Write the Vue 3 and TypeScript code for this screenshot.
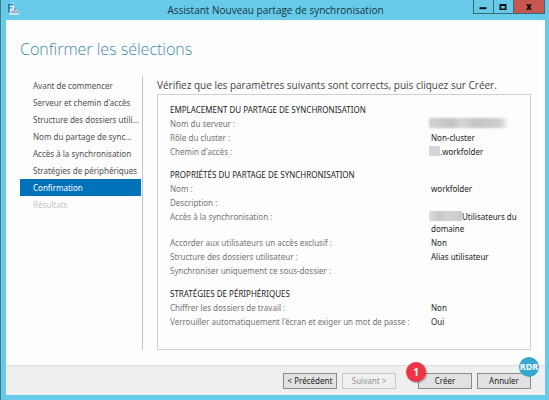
<script setup lang="ts">
interface Row {
  label: string
  value: string
  mask?: 'line' | 'short' | 'medium'
}

interface Section {
  title: string
  rows: Row[]
}

const steps: string[] = [
  'Avant de commencer',
  "Serveur et chemin d'accès",
  'Structure des dossiers utili...',
  'Nom du partage de sync...',
  'Accès à la synchronisation',
  'Stratégies de périphériques',
  'Confirmation',
  'Résultats',
]
const current = 6

const sections: Section[] = [
  {
    title: 'EMPLACEMENT DU PARTAGE DE SYNCHRONISATION',
    rows: [
      { label: 'Nom du serveur :', value: '', mask: 'line' },
      { label: 'Rôle du cluster :', value: 'Non-cluster' },
      { label: "Chemin d'accès :", value: '.workfolder', mask: 'short' },
    ],
  },
  {
    title: 'PROPRIÉTÉS DU PARTAGE DE SYNCHRONISATION',
    rows: [
      { label: 'Nom :', value: 'workfolder' },
      { label: 'Description :', value: '' },
      { label: 'Accès à la synchronisation :', value: 'Utilisateurs du domaine', mask: 'medium' },
      { label: 'Accorder aux utilisateurs un accès exclusif :', value: 'Non' },
      { label: 'Structure des dossiers utilisateur :', value: 'Alias utilisateur' },
      { label: 'Synchroniser uniquement ce sous-dossier :', value: '' },
    ],
  },
  {
    title: 'STRATÉGIES DE PÉRIPHÉRIQUES',
    rows: [
      { label: 'Chiffrer les dossiers de travail :', value: 'Non' },
      { label: "Verrouiller automatiquement l'écran et exiger un mot de passe :", value: 'Oui' },
    ],
  },
]
</script>

<template>
  <div class="window">
    <header class="titlebar">
      <svg class="app-icon" viewBox="0 0 12 12" aria-hidden="true">
        <path d="M1 0.5h6v9H1z" fill="#f4f8fc" />
        <path d="M1 0.5h1.8v9H1zM2.5 1h4v1.6h-4zM2.5 4.2h2.8v1.2H2.5z" fill="#2878bd" />
        <path d="M3 8.5 7.5 5l4.2 3.5v2.8H3z" fill="#c7d3df" />
        <path d="M4 8.6h7v1H4z" fill="#7190ad" />
        <path d="M2 10.5h10v1H2z" fill="#eef2f7" />
        <circle cx="8" cy="6.3" r="1.2" fill="#8799ad" />
      </svg>
      <span class="title">Assistant Nouveau partage de synchronisation</span>
      <div class="controls">
        <button type="button" class="ctl" aria-label="Réduire">
          <svg viewBox="0 0 8 8"><path d="M0.5 4.2h7v2h-7z" /></svg>
        </button>
        <button type="button" class="ctl" aria-label="Agrandir">
          <svg viewBox="0 0 8 8"><path fill-rule="evenodd" d="M0.5 1h7v6h-7zM2.2 3v2.6h3.6V3z" /></svg>
        </button>
        <button type="button" class="ctl close" aria-label="Fermer">
          <svg viewBox="0 0 8 8"><path d="M1.2 1h2L4 2.5 4.8 1h2L5.2 4l1.6 3h-2L4 5.5 3.2 7h-2l1.6-3z" /></svg>
        </button>
      </div>
    </header>

    <div class="client">
      <h1>Confirmer les sélections</h1>
      <div class="body">
        <nav class="steps">
          <a
            v-for="(step, i) in steps"
            :key="step"
            href="#"
            class="step"
            :class="{ active: i === current, pending: i > current }"
            >{{ step }}</a
          >
        </nav>
        <main class="main">
          <p class="intro">Vérifiez que les paramètres suivants sont corrects, puis cliquez sur Créer.</p>
          <div class="summary">
            <section v-for="s in sections" :key="s.title">
              <h2>{{ s.title }}</h2>
              <dl>
                <div v-for="r in s.rows" :key="r.label" class="row">
                  <dt>{{ r.label }}</dt>
                  <dd><span v-if="r.mask" class="mask" :class="r.mask"></span>{{ r.value }}</dd>
                </div>
              </dl>
            </section>
          </div>
        </main>
      </div>

      <footer class="footer">
        <button type="button" class="btn">&lt; Précédent</button>
        <button type="button" class="btn" disabled>Suivant &gt;</button>
        <button type="button" class="btn create">Créer<span class="badge">1</span></button>
        <button type="button" class="btn">Annuler</button>
        <span class="logo"><b>RDR</b></span>
      </footer>
    </div>
  </div>
</template>

<style>
body {
  margin: 0;
}
</style>

<style scoped>
.window {
  box-sizing: border-box;
  min-height: 100vh;
  display: flex;
  flex-direction: column;
  padding: 0 4px 5px 5px;
  border-left: 1px solid #3c7d8c;
  background: #67cae8;
  font-family: 'Noto Sans', 'Open Sans', sans-serif;
  font-size: 8px;
  line-height: 12px;
  color: #222;
}
.titlebar {
  display: grid;
  grid-template-columns: 72px 1fr 72px;
  height: 20px;
  align-items: start;
}
.app-icon {
  width: 12px;
  height: 12px;
  margin: 3px 0 0 1px;
}
.title {
  text-align: center;
  font-family: 'Open Sans', 'Noto Sans', sans-serif;
  font-size: 10px;
  line-height: 20px;
  color: #17343f;
  white-space: nowrap;
}
.controls {
  display: flex;
  height: 14px;
  border: 1px solid #35687a;
  border-top: 0;
  box-sizing: border-box;
}
.ctl {
  flex: 20;
  display: flex;
  align-items: center;
  justify-content: center;
  padding: 0;
  border: 0;
  border-right: 1px solid #35687a;
  background: transparent;
}
.ctl.close {
  flex: 32;
  border-right: 0;
  background: #c5574e;
}
.ctl svg {
  width: 8px;
  height: 8px;
  fill: #111;
}
.client {
  flex: 1;
  display: flex;
  flex-direction: column;
  background: #fdfdfd;
}
h1 {
  margin: 0;
  padding: 17px 14px 0;
  font-family: 'Open Sans', 'Noto Sans', sans-serif;
  font-size: 16px;
  line-height: 24px;
  font-weight: 300;
  color: #3f8ba6;
}
.body {
  flex: 1;
  display: flex;
  gap: 14px;
  padding: 15px 14px 15px;
}
.steps {
  flex: 0 0 122px;
  display: flex;
  flex-direction: column;
  padding-top: 1px;
  border-right: 1px solid #c4c4c4;
}
.step {
  margin-right: 1px;
  padding-left: 13px;
  line-height: 17px;
  white-space: nowrap;
  color: #505050;
  text-decoration: none;
}
.step.active {
  background: #0072bc;
  color: #fff;
}
.step.pending {
  color: #c4c4c4;
}
.main {
  flex: 1;
  display: flex;
  flex-direction: column;
  min-width: 0;
}
.intro {
  margin: 0;
  font-family: 'Open Sans', 'Noto Sans', sans-serif;
  font-size: 10px;
  line-height: 18px;
  color: #444;
  white-space: nowrap;
}
.summary {
  flex: 1;
  display: flex;
  flex-direction: column;
  gap: 8px;
  padding: 7px 0 8px 12px;
  border: 1px solid #cfcfcf;
}
h2 {
  margin: 0;
  font-size: 8px;
  line-height: 15px;
  font-weight: 400;
  color: #222;
}
dl {
  margin: 0;
}
.row {
  display: grid;
  grid-template-columns: 1fr 99px;
  min-height: 12px;
  padding: 1px 0;
}
dt {
  color: #747474;
  white-space: nowrap;
}
dd {
  margin: 0;
  color: #222;
}
.mask {
  display: inline-block;
  height: 10px;
  margin-left: -2px;
  vertical-align: top;
  background: #d5d5d5;
}
.mask.line {
  width: 78px;
  background: linear-gradient(90deg, #d2d2d2, #c2c2c2 30%, #d6d6d6 42%, #c4c4c4 60%, #cecece 90%, #eee);
  filter: blur(1px);
}
.mask.short {
  width: 11px;
}
.mask.medium {
  width: 33px;
  background: linear-gradient(90deg, #ddd, #c6c6c6 30%, #d2d2d2 60%, #cacaca);
}
.footer {
  position: relative;
  display: flex;
  justify-content: flex-end;
  align-items: flex-start;
  gap: 5px;
  height: 30px;
  box-sizing: border-box;
  padding: 7px 14px 0;
  border-top: 1px solid #dcdcdc;
  background: #efefef;
}
.btn {
  position: relative;
  box-sizing: border-box;
  width: 54px;
  height: 16px;
  padding: 0;
  border: 1px solid #8a8a8a;
  background: #e2e2e2;
  font: inherit;
  line-height: 14px;
  color: #222;
}
.btn:disabled {
  border-color: #c8c8c8;
  background: #f0f0f0;
  color: #909090;
}
.create {
  margin-left: 17px;
}
.badge {
  position: absolute;
  left: -13px;
  top: -12px;
  width: 20px;
  height: 20px;
  border-radius: 50%;
  background: #f03445;
  color: #fff;
  font-size: 10px;
  font-weight: 700;
  line-height: 20px;
  box-shadow: 1px 1px 2px #0005;
}
.logo {
  position: absolute;
  right: 6px;
  top: -9px;
  width: 20px;
  height: 20px;
  border-radius: 50%;
  background: #35a8cf;
  display: flex;
  align-items: center;
  justify-content: center;
  color: #fff;
  font-size: 9px;
  line-height: 20px;
}
</style>
